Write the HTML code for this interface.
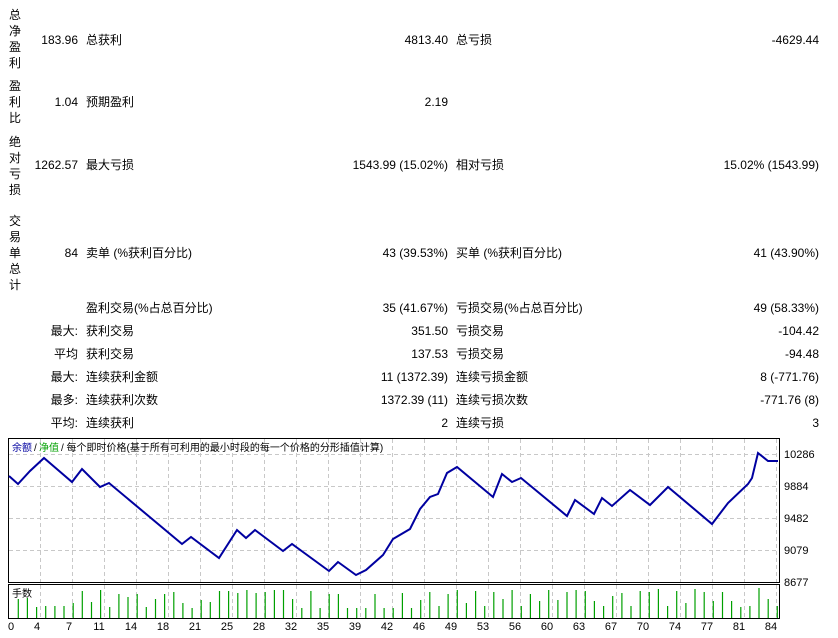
<!DOCTYPE html>
<html><head><meta charset="utf-8"><style>
body{margin:0;width:838px;height:638px;background:#fff;overflow:hidden;font-family:"Liberation Sans","Noto Sans CJK SC",sans-serif;font-size:12px;color:#000;position:relative}
.t{position:absolute;white-space:nowrap;line-height:14px}
.r{text-align:right}
.v{position:absolute;left:8px;width:14px;line-height:16px;text-align:center}
</style></head><body>
<div class="v" style="top:7px">总<br>净<br>盈<br>利</div>
<div class="v" style="top:78px">盈<br>利<br>比</div>
<div class="v" style="top:134px">绝<br>对<br>亏<br>损</div>
<div class="v" style="top:213px">交<br>易<br>单<br>总<br>计</div>

<div class="t r" style="right:760px;top:33px">183.96</div><div class="t" style="left:86px;top:33px">总获利</div>
<div class="t r" style="right:390px;top:33px">4813.40</div><div class="t" style="left:456px;top:33px">总亏损</div>
<div class="t r" style="right:19px;top:33px">-4629.44</div>

<div class="t r" style="right:760px;top:95px">1.04</div><div class="t" style="left:86px;top:95px">预期盈利</div>
<div class="t r" style="right:390px;top:95px">2.19</div>

<div class="t r" style="right:760px;top:158px">1262.57</div><div class="t" style="left:86px;top:158px">最大亏损</div>
<div class="t r" style="right:390px;top:158px">1543.99 (15.02%)</div><div class="t" style="left:456px;top:158px">相对亏损</div>
<div class="t r" style="right:19px;top:158px">15.02% (1543.99)</div>

<div class="t r" style="right:760px;top:246px">84</div><div class="t" style="left:86px;top:246px">卖单 (%获利百分比)</div>
<div class="t r" style="right:390px;top:246px">43 (39.53%)</div><div class="t" style="left:456px;top:246px">买单 (%获利百分比)</div>
<div class="t r" style="right:19px;top:246px">41 (43.90%)</div>

<div class="t" style="left:86px;top:301px">盈利交易(%占总百分比)</div>
<div class="t r" style="right:390px;top:301px">35 (41.67%)</div><div class="t" style="left:456px;top:301px">亏损交易(%占总百分比)</div>
<div class="t r" style="right:19px;top:301px">49 (58.33%)</div>

<div class="t r" style="right:760px;top:324px">最大:</div><div class="t" style="left:86px;top:324px">获利交易</div>
<div class="t r" style="right:390px;top:324px">351.50</div><div class="t" style="left:456px;top:324px">亏损交易</div>
<div class="t r" style="right:19px;top:324px">-104.42</div>

<div class="t r" style="right:760px;top:347px">平均</div><div class="t" style="left:86px;top:347px">获利交易</div>
<div class="t r" style="right:390px;top:347px">137.53</div><div class="t" style="left:456px;top:347px">亏损交易</div>
<div class="t r" style="right:19px;top:347px">-94.48</div>

<div class="t r" style="right:760px;top:370px">最大:</div><div class="t" style="left:86px;top:370px">连续获利金额</div>
<div class="t r" style="right:390px;top:370px">11 (1372.39)</div><div class="t" style="left:456px;top:370px">连续亏损金额</div>
<div class="t r" style="right:19px;top:370px">8 (-771.76)</div>

<div class="t r" style="right:760px;top:393px">最多:</div><div class="t" style="left:86px;top:393px">连续获利次数</div>
<div class="t r" style="right:390px;top:393px">1372.39 (11)</div><div class="t" style="left:456px;top:393px">连续亏损次数</div>
<div class="t r" style="right:19px;top:393px">-771.76 (8)</div>

<div class="t r" style="right:760px;top:416px">平均:</div><div class="t" style="left:86px;top:416px">连续获利</div>
<div class="t r" style="right:390px;top:416px">2</div><div class="t" style="left:456px;top:416px">连续亏损</div>
<div class="t r" style="right:19px;top:416px">3</div>

<svg style="position:absolute;left:0;top:0" width="838" height="638" font-family="Liberation Sans, Noto Sans CJK SC, sans-serif">
<g stroke="#c8c8c8" stroke-dasharray="4,3" stroke-width="1">
<path d="M9 454.5H779M9 486.5H779M9 518.5H779M9 550.5H779"/>
<path d="M40.5 439V582M72.5 439V582M104.5 439V582M136.5 439V582M168.5 439V582M200.5 439V582M232.5 439V582M264.5 439V582M296.5 439V582M328.5 439V582M360.5 439V582M392.5 439V582M424.5 439V582M456.5 439V582M488.5 439V582M520.5 439V582M552.5 439V582M584.5 439V582M616.5 439V582M648.5 439V582M680.5 439V582M712.5 439V582M744.5 439V582M776.5 439V582"/>
<path d="M40.5 585V617M72.5 585V617M104.5 585V617M136.5 585V617M168.5 585V617M200.5 585V617M232.5 585V617M264.5 585V617M296.5 585V617M328.5 585V617M360.5 585V617M392.5 585V617M424.5 585V617M456.5 585V617M488.5 585V617M520.5 585V617M552.5 585V617M584.5 585V617M616.5 585V617M648.5 585V617M680.5 585V617M712.5 585V617M744.5 585V617M776.5 585V617"/>
</g>
<rect x="8.5" y="438.5" width="771" height="144" fill="none" stroke="#000"/>
<rect x="8.5" y="584.5" width="771" height="34" fill="none" stroke="#000"/>
<text x="12" y="451" font-size="10" fill="#0000a0">余额</text><text x="34" y="451" font-size="10">/</text>
<text x="39" y="451" font-size="10" fill="#00a000">净值</text><text x="61" y="451" font-size="10">/ 每个即时价格(基于所有可利用的最小时段的每一个价格的分形插值计算)</text>
<text x="12" y="597" font-size="10">手数</text>
<polyline fill="none" stroke="#0000a0" stroke-width="2" points="9,476 18,484 30,471 44,458 58,470 72,482 82,469 100,487 109,483 182,544 191,537 219,558 237,530 246,538 255,530 283,551 292,544 329,571 338,562 356,575 366,570 383,555 393,539 410,529 420,509 430,497 438,494 447,473 457,467 493,497 502,474 512,482 521,478 567,516 575,500 594,514 602,498 612,506 630,490 650,505 668,487 712,524 728,503 748,484 752,478 758,453 768,461 778,461"/>
<g stroke="#00a000" stroke-width="1.2" id="b"></g>
<g font-size="11">
<text x="784" y="458">10286</text><text x="784" y="490">9884</text><text x="784" y="522">9482</text><text x="784" y="554">9079</text><text x="784" y="586">8677</text>
</g>
<g font-size="11" text-anchor="middle">
<text x="11" y="630">0</text><text x="37" y="630">4</text><text x="69" y="630">7</text><text x="99" y="630">11</text><text x="131" y="630">14</text><text x="163" y="630">18</text><text x="195" y="630">21</text><text x="227" y="630">25</text><text x="259" y="630">28</text><text x="291" y="630">32</text><text x="323" y="630">35</text><text x="355" y="630">39</text><text x="387" y="630">42</text><text x="419" y="630">46</text><text x="451" y="630">49</text><text x="483" y="630">53</text><text x="515" y="630">56</text><text x="547" y="630">60</text><text x="579" y="630">63</text><text x="611" y="630">67</text><text x="643" y="630">70</text><text x="675" y="630">74</text><text x="707" y="630">77</text><text x="739" y="630">81</text><text x="771" y="630">84</text>
</g>
</svg>
<script>
var t=[599,598,607,606,606,606,603,591,602,590,607,594,597,594,607,599,594,592,603,608,600,602,591,591,593,590,593,592,590,590,599,608,591,608,594,594,608,608,608,594,608,608,593,608,
600,592,606,594,590,603,591,606,592,599,590,606,594,601,590,600,
592,590,591,601,606,596,593,606,591,592,589,606,591,603,589,592,601,592,601,607,606,588,599,606];
var g=document.getElementById('b'),s='';
for(var i=0;i<t.length;i++){var x=(18.3+9.145*i).toFixed(1);s+='<line x1="'+x+'" x2="'+x+'" y1="618" y2="'+t[i]+'"/>';}
g.innerHTML=s;
</script>
</body></html>
